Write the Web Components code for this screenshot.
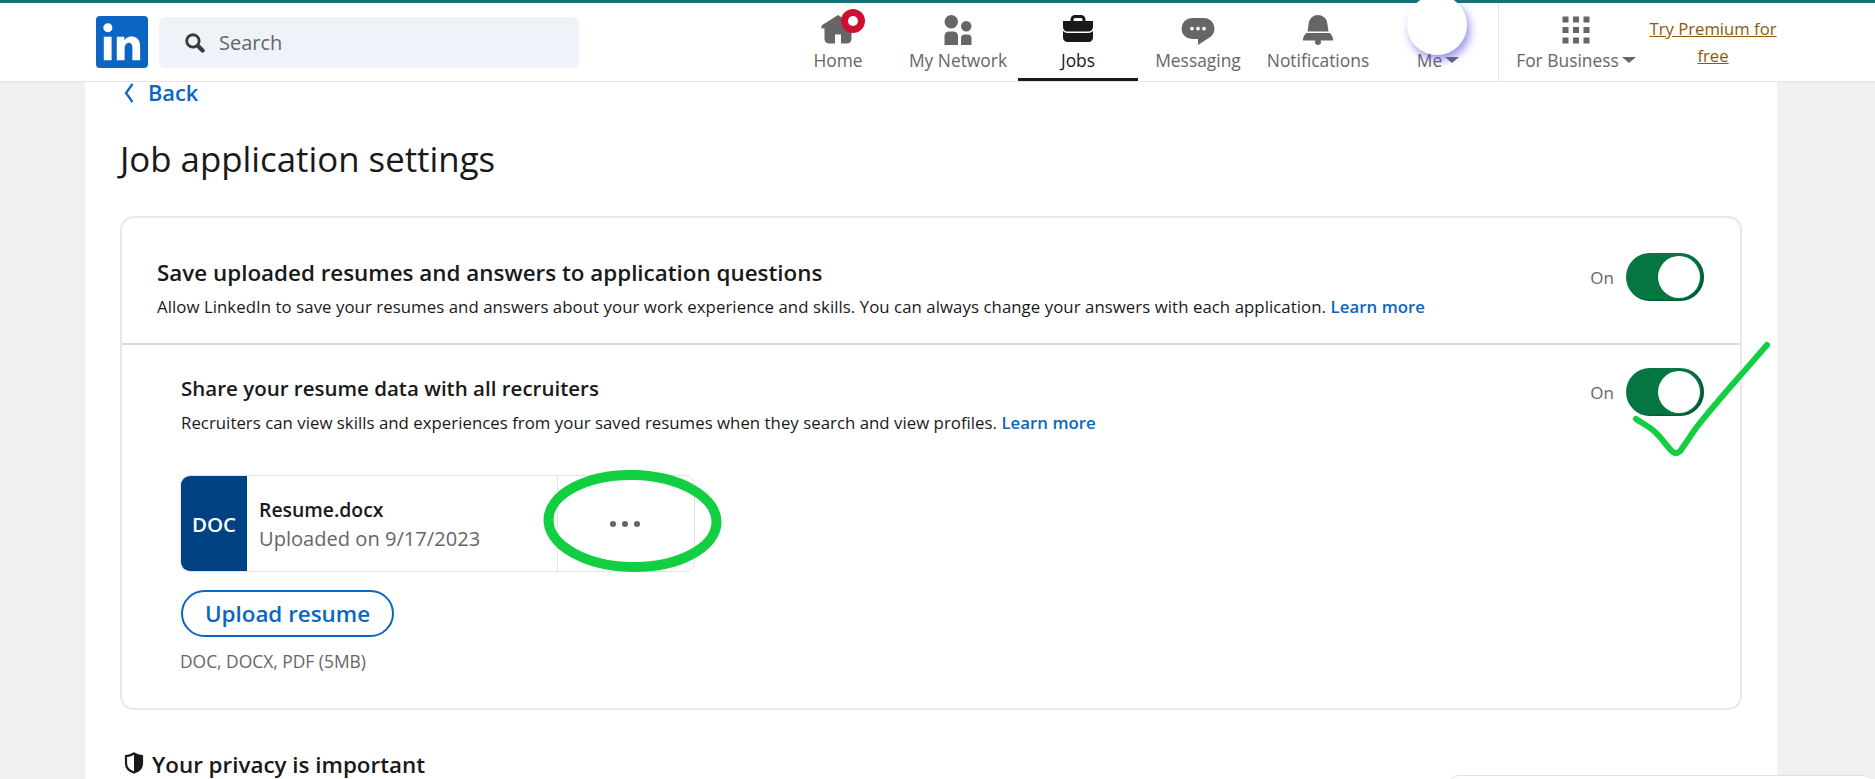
<!DOCTYPE html>
<html><head><meta charset="utf-8"><style>
html,body{margin:0;height:779px;overflow:hidden;background:#f1f0ee;font-family:"Open Sans","Noto Sans",sans-serif;color:#191919}
</style></head><body>
<li-page>
  <li-nav></li-nav>
  <li-main></li-main>
  <li-msg-bar></li-msg-bar>
  <li-marks></li-marks>
</li-page>
<template id="t-nav-item"><style>
:host{display:flex;flex-direction:column;align-items:center;width:120px;height:78px;box-sizing:border-box;padding-top:9px;color:#666;position:relative;font-size:17.4px}
:host([active]){color:#191919;border-bottom:3px solid #191919}
::slotted(svg){width:36px;height:36px;fill:currentColor;display:block;flex:none}
.l{line-height:24px;margin-top:0;white-space:nowrap;display:flex;align-items:center;gap:3px}
</style><slot name="icon"></slot><div class="l"><slot></slot></div></template>
<script>
const ICONS={
home:'M23 9v2h-2v7a3 3 0 01-3 3h-4v-6h-4v6H6a3 3 0 01-3-3v-7H1V9l11-7 5 3.18V2h3v5.09z',
net:'M12 16v6H3v-6a3 3 0 013-3h3a3 3 0 013 3zm5.5-3A3.5 3.5 0 1014 9.5a3.5 3.5 0 003.5 3.5zm1 2h-2a2.5 2.5 0 00-2.5 2.5V22h7v-4.5a2.5 2.5 0 00-2.5-2.5zM7.5 2A4.5 4.5 0 1012 6.5 4.49 4.49 0 007.5 2z',
jobs:'M17 6V5a3 3 0 00-3-3h-4a3 3 0 00-3 3v1H2v4a3 3 0 003 3h14a3 3 0 003-3V6zM9 5a1 1 0 011-1h4a1 1 0 011 1v1H9zm10 9a4 4 0 003-1.38V17a3 3 0 01-3 3H5a3 3 0 01-3-3v-4.38A4 4 0 005 14z',
msg:'M16 4H8a7 7 0 000 14h4v4l8.16-5.39A6.78 6.78 0 0023 11a7 7 0 00-7-7zm-8 8.25A1.25 1.25 0 119.25 11 1.25 1.25 0 018 12.25zm4 0A1.25 1.25 0 1113.25 11 1.25 1.25 0 0112 12.25zm4 0A1.25 1.25 0 1117.25 11 1.25 1.25 0 0116 12.25z',
bell:'M22 19h-8.28a2 2 0 11-3.44 0H2v-1a4.52 4.52 0 011.17-2.83l1-1.17h15.7l1 1.17A4.42 4.42 0 0122 18zM18.21 7.44A6.27 6.27 0 0012 2a6.27 6.27 0 00-6.21 5.44L5 13h14z',
grid:'M3 3h4v4H3zm7 0h4v4h-4zm7 0h4v4h-4zM3 10h4v4H3zm7 0h4v4h-4zm7 0h4v4h-4zM3 17h4v4H3zm7 0h4v4h-4zm7 0h4v4h-4z'};
const icon=(n)=>`<svg slot="icon" viewBox="0 0 24 24"><path d="${ICONS[n]}"/></svg>`;
const caret=`<svg viewBox="0 0 14 6" style="width:14px;height:6px;fill:currentColor"><path d="M0 0h14L7 6z"/></svg>`;

class LiPage extends HTMLElement{constructor(){super();this.attachShadow({mode:'open'}).innerHTML=`<style>:host{display:block;position:relative;height:779px;overflow:hidden}</style><slot></slot>`}}
customElements.define('li-page',LiPage);

class NavItem extends HTMLElement{constructor(){super();this.attachShadow({mode:'open'}).append(document.getElementById('t-nav-item').content.cloneNode(true))}}
customElements.define('nav-item',NavItem);

class LiNav extends HTMLElement{constructor(){super();const s=this.attachShadow({mode:'open'});s.innerHTML=`<style>
:host{display:flex;height:82px;box-sizing:border-box;background:#fff;border-top:3px solid #1c6f77;border-bottom:1px solid #e4e4e4;position:relative;z-index:2}
.logo{width:52px;height:52px;margin:13px 11px 0 96px;flex:none;display:block}
.search{width:420px;height:51px;margin:14px 199px 0 0;flex:none;background:#edf3f8;border-radius:6px;display:flex;align-items:center;gap:13px;padding-left:25px;box-sizing:border-box;color:#666;font-size:20px}
.search svg{width:22px;height:22px;fill:#3a3a3a;flex:none}
.items{display:flex;height:78px;flex:none}
.me{position:absolute;left:1407px;top:-8px;width:60px;height:60px;border-radius:50%;background:#fff;box-shadow:3px 5px 9px rgba(80,80,225,.6)}
.biz{width:155px;height:78px;border-left:1px solid #e4e4e4;box-sizing:border-box;flex:none}
.biz nav-item{width:auto}
.prem{width:130px;margin-left:-5px;flex:none;text-align:center;color:#915907;text-decoration:underline;font-size:16.7px;line-height:27px;padding-top:12px;box-sizing:border-box;white-space:nowrap}
</style>
<svg class="logo" viewBox="2 2 20 20"><path fill="#0a66c2" d="M20.5 2h-17A1.5 1.5 0 002 3.500v17A1.500 1.500 0 003.500 22h17a1.500 1.500 0 001.500-1.500v-17A1.500 1.500 0 0020.500 2z"/><path fill="#fff" d="M8 19H5v-9h3zM6.500 8.250A1.750 1.750 0 118.300 6.500a1.780 1.780 0 01-1.800 1.750zM19 19h-3v-4.740c0-1.420-.6-1.930-1.380-1.930A1.740 1.740 0 0013 14.190a.66.66 0 000 .14V19h-3v-9h2.900v1.300a3.110 3.110 0 012.700-1.400c1.550 0 3.360.86 3.360 3.660z"/></svg>
<div class="search"><svg viewBox="0 0 16 16"><path d="M14.560 12.440L11.300 9.180a5.510 5.510 0 10-2.120 2.120l3.260 3.260a1.500 1.500 0 102.120-2.120zM3 6.500A3.500 3.500 0 116.500 10 3.500 3.500 0 013 6.500z"/></svg><span>Search</span></div>
<div class="items">
<nav-item>${icon('home')}Home<svg slot="icon" viewBox="0 0 24 24" style="position:absolute;left:63px;top:6px;width:24px;height:24px"><circle cx="12" cy="12" r="12" fill="#cb112d"/><circle cx="12" cy="12" r="5" fill="#fff"/></svg></nav-item>
<nav-item>${icon('net')}My Network</nav-item>
<nav-item active>${icon('jobs')}Jobs</nav-item>
<nav-item>${icon('msg')}Messaging</nav-item>
<nav-item>${icon('bell')}Notifications</nav-item>
<nav-item><svg slot="icon" viewBox="0 0 24 24"></svg><span>Me</span>${caret}</nav-item>
</div>
<div class="biz"><nav-item>${icon('grid')}<span>For Business</span>${caret}</nav-item></div>
<div class="prem">Try Premium for<br>free</div>
<div class="me"></div>`}}
customElements.define('li-nav',LiNav);

class LiToggle extends HTMLElement{constructor(){super();this.attachShadow({mode:'open'}).innerHTML=`<style>
:host{display:flex;align-items:center;gap:12px;color:#666;font-size:17px}
.t{width:78px;height:48px;border-radius:24px;background:#057642;position:relative;flex:none;box-shadow:inset -2px -1px 2px rgba(0,0,0,.3)}
.k{position:absolute;left:32px;top:3px;width:42px;height:42px;border-radius:50%;background:#fff}
</style><span>On</span><div class="t"><div class="k"></div></div>`}}
customElements.define('li-toggle',LiToggle);

class SettingRow extends HTMLElement{constructor(){super();this.attachShadow({mode:'open'}).innerHTML=`<style>
:host{display:flex;justify-content:space-between;align-items:flex-start}
h2{margin:0;font-weight:600;font-size:var(--ts,22.400px);line-height:30px;color:#191919}
p{margin:var(--gap,8px) 0 0;font-size:16.800px;line-height:22px;letter-spacing:var(--dl,.06px);color:#191919;white-space:nowrap}
</style><div><h2><slot name="title"></slot></h2><p><slot name="desc"></slot></p></div><slot name="toggle"></slot>`}}
customElements.define('setting-row',SettingRow);

class ResumeCard extends HTMLElement{constructor(){super();this.attachShadow({mode:'open'}).innerHTML=`<style>
:host{display:flex;width:515px;height:97px;box-sizing:border-box;border:1px solid #e4e4e4;border-radius:10px;overflow:hidden;background:#fff}
.d{width:66px;background:#004182;color:#fff;font-weight:600;font-size:20.500px;display:flex;align-items:center;justify-content:center;flex:none}
.m{width:311px;flex:none;padding:19px 0 0 12px;box-sizing:border-box;border-right:1px solid #e4e4e4}
.n{font-size:19.400px;font-weight:600;line-height:30px;color:#191919}
.u{font-size:20.100px;line-height:28px;color:#666}
.o{flex:1;display:flex;align-items:center;justify-content:center;gap:6px;padding-top:1px;padding-right:3px}
.o i{width:6px;height:6px;border-radius:50%;background:#666}
</style><div class="d">DOC</div><div class="m"><div class="n"><slot name="name"></slot></div><div class="u"><slot name="date"></slot></div></div><div class="o"><i></i><i></i><i></i></div>`}}
customElements.define('resume-card',ResumeCard);

const LM=`<a href="#" style="color:#0a66c2;font-weight:600;text-decoration:none">Learn more</a>`;
class LiMain extends HTMLElement{constructor(){super();this.attachShadow({mode:'open'}).innerHTML=`<style>
:host{display:block;margin-left:85px;width:1692px;height:697px;background:#fff;box-sizing:border-box;padding-left:35px}
.back{display:flex;align-items:center;gap:14px;color:#0a66c2;font-weight:600;font-size:21.800px;height:22px;line-height:22px;padding-left:4px}
.back svg{width:10px;height:20px;fill:none;stroke:#0a66c2;stroke-width:2.200}
h1{margin:33px 0 0;font-weight:400;font-size:34.800px;line-height:44px}
.card{width:1622px;height:494px;margin-top:35px;box-sizing:border-box;border:2px solid #e8e8e8;border-radius:14px}
.r1{height:127px;box-sizing:border-box;padding:40px 36px 0 35px;border-bottom:2px solid #dcdcdc}
li-toggle{margin-top:-5px}
.r2{padding:28px 36px 0 59px}
.up{display:block;width:213px;height:47px;margin:18px 0 0 0;box-sizing:border-box;border:2px solid #0a66c2;border-radius:24px;color:#0a66c2;font-weight:600;font-size:22.400px;text-align:center;line-height:43px}
.hint{margin:13px 0 0 -1px;color:#666;font-size:17.400px;line-height:22px}
.priv{display:flex;align-items:center;gap:8px;margin-top:41px;padding-left:4px;font-weight:600;font-size:22.400px;line-height:28px}
.priv svg{width:20px;height:22px;flex:none;margin-top:-4px}
</style>
<div class="back"><svg viewBox="0 0 10 20"><path d="M8.500 1L2 10l6.500 9"/></svg><span>Back</span></div>
<h1>Job application settings</h1>
<div class="card">
 <div class="r1"><setting-row>
   <span slot="title">Save uploaded resumes and answers to application questions</span>
   <span slot="desc">Allow LinkedIn to save your resumes and answers about your work experience and skills. You can always change your answers with each application. ${LM}</span>
   <li-toggle slot="toggle"></li-toggle>
 </setting-row></div>
 <div class="r2"><setting-row style="--ts:20.500px;--gap:9px;--dl:.03px">
   <span slot="title">Share your resume data with all recruiters</span>
   <span slot="desc">Recruiters can view skills and experiences from your saved resumes when they search and view profiles. ${LM}</span>
   <li-toggle slot="toggle"></li-toggle>
 </setting-row>
 <resume-card style="margin:41px 0 0 -1px"><span slot="name">Resume.docx</span><span slot="date">Uploaded on 9/17/2023</span></resume-card>
 <div class="up">Upload resume</div>
 <div class="hint">DOC, DOCX, PDF (5MB)</div>
 </div>
</div>
<div class="priv"><svg viewBox="0 0 20 22"><path d="M10 1.500c3 1.800 5.500 2.500 8 2.700v7c0 4.500-3.200 7.700-8 9.300-4.800-1.600-8-4.800-8-9.300v-7c2.500-.2 5-.9 8-2.700z" fill="#fff" stroke="#191919" stroke-width="2.200"/><path d="M10 1.500v19c4.800-1.600 8-4.800 8-9.300v-7c-2.500-.2-5-.9-8-2.700z" fill="#191919"/></svg><span>Your privacy is important</span></div>`}}
customElements.define('li-main',LiMain);

class LiMsgBar extends HTMLElement{constructor(){super();this.attachShadow({mode:'open'}).innerHTML=`<style>
:host{position:absolute;left:1447px;top:775px;width:428px;height:20px;box-sizing:border-box;background:#fff;border:1px solid #e0e0e0;border-radius:12px 12px 0 0;z-index:3}</style>`}}
customElements.define('li-msg-bar',LiMsgBar);

class LiMarks extends HTMLElement{constructor(){super();this.attachShadow({mode:'open'}).innerHTML=`<style>
:host{position:absolute;left:0;top:0;width:1875px;height:779px;pointer-events:none;z-index:4}
svg{display:block}</style>
<svg width="1875" height="779" fill="none" stroke="#12cf41" stroke-linecap="round" stroke-linejoin="round">
<path stroke-width="6" d="M1636 419c6 4 12 7 18 12 8 7 13 16 19 21 3 2 6 1 8-2l15-22c14-18 29-35 43-51 10-11 19-22 28-32"/>
<ellipse cx="632.500" cy="521" rx="84" ry="46" stroke-width="10" transform="rotate(1 633 521)"/>
</svg>`}}
customElements.define('li-marks',LiMarks);
</script>
</body></html>
